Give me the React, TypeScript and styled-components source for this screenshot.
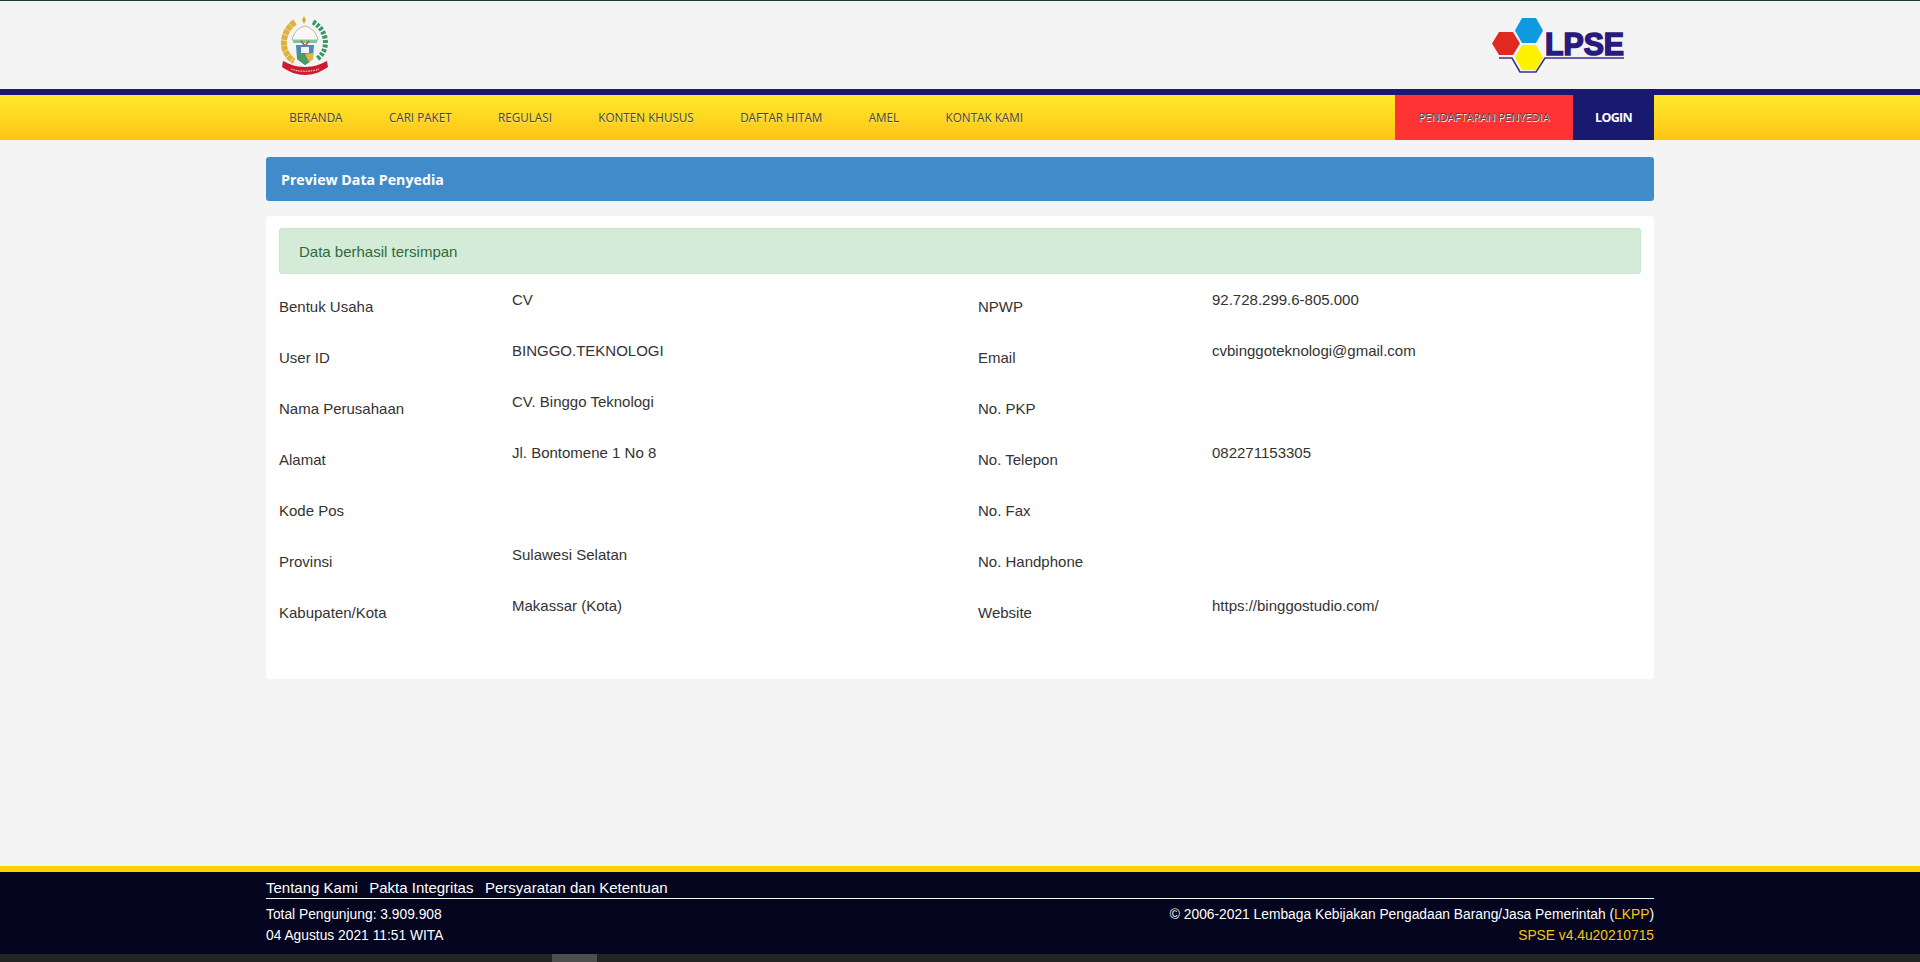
import * as React from 'react';
import styled, { createGlobalStyle } from 'styled-components';

const GlobalStyle = createGlobalStyle`
  html, body {
    margin: 0;
    padding: 0;
    height: 100%;
    overflow: hidden;
    background: #f4f4f4;
  }
  * { box-sizing: border-box; }
`;

const Page = styled.div`
  display: flex;
  flex-direction: column;
  height: 962px;
  font-family: "Liberation Sans", Arial, sans-serif;
  font-size: 14px;
  color: #333;
  background: #f4f4f4;
`;

const Container = styled.div`
  width: 1388px;
  margin-left: 266px;
`;

const Header = styled.header`
  height: 95px;
  border-top: 1px solid #1f3a24;
  border-bottom: 6px solid #191970;
`;

const HeaderInner = styled(Container)`
  display: flex;
  justify-content: space-between;
  padding: 14px 24px 0 14px;
`;

const NavBar = styled.nav`
  height: 45px;
  background: linear-gradient(to bottom, #ffea2c, #fdc416);
`;

const NavInner = styled(Container)`
  display: flex;
  height: 100%;
  font-family: "Open Sans", sans-serif;
  font-size: 11.7px;
`;

const NavItem = styled.a`
  display: flex;
  align-items: center;
  padding: 0 23.2px 2px;
  color: #444;
  text-shadow: 0 1px 0 rgba(255, 255, 255, 0.45);
`;

const NavSpacer = styled.div`
  flex: 1;
`;

const RegisterButton = styled.a`
  display: flex;
  align-items: center;
  justify-content: center;
  width: 178px;
  padding-bottom: 2px;
  background: #ff3333;
  color: #444;
  text-shadow: 0.7px 0.7px 0 #fff;
  font-size: 11px;
`;

const LoginButton = styled.a`
  display: flex;
  align-items: center;
  justify-content: center;
  width: 81px;
  margin-top: -6px;
  padding-top: 6px;
  background: #191970;
  color: #fff;
  font-size: 12.5px;
  font-weight: 700;
  letter-spacing: -0.7px;
`;

const Content = styled(Container)`
  flex: 1;
  padding-top: 17px;
`;

const PanelHeading = styled.div`
  height: 44px;
  padding: 0 15px;
  display: flex;
  align-items: center;
  border-radius: 3px;
  background: #428bca;
  color: #fff;
  font-family: "Open Sans", sans-serif;
  font-size: 14.2px;
  font-weight: 700;
`;

const Card = styled.div`
  height: 463px;
  margin-top: 15px;
  padding: 12px 13px;
  border-radius: 4px;
  background: #fff;
`;

const Alert = styled.div`
  height: 46px;
  padding: 1px 19px 0;
  display: flex;
  align-items: center;
  border: 1px solid #c9e4cf;
  border-radius: 3px;
  background: #d4ebd8;
  color: #2e6b3a;
  font-size: 15px;
`;

const DataGrid = styled.div`
  display: grid;
  grid-template-columns: 699px 1fr;
  margin-top: 8px;
`;

const Row = styled.div<{ $labelWidth: number }>`
  display: grid;
  grid-template-columns: ${p => p.$labelWidth}px 1fr;
  height: 51px;
`;

const Label = styled.div`
  padding-top: 15px;
  font-size: 15px;
  line-height: 20px;
`;

const Value = styled.div`
  padding-top: 8px;
  font-size: 15px;
  line-height: 20px;
`;

const Footer = styled.footer`
  height: 88px;
  border-top: 6px solid #ffd200;
  background: #05051f;
  color: #fff;
`;

const FooterLinks = styled.div`
  display: flex;
  gap: 11.5px;
  height: 27px;
  padding-top: 7px;
  border-bottom: 1px solid #f4f4f4;
  font-size: 15px;
  line-height: 17px;
`;

const FooterRows = styled.div`
  display: flex;
  justify-content: space-between;
  padding-top: 5px;
  font-size: 13.8px;
  line-height: 21px;
`;

const FooterRight = styled.div`
  text-align: right;
`;

const Accent = styled.span`
  color: #f5c518;
`;

const ScrollTrack = styled.div`
  flex: none;
  height: 8px;
  padding-left: 552px;
  background: #242424;
`;

const ScrollThumb = styled.div`
  width: 45px;
  height: 100%;
  background: #4d4d4d;
`;

const CoatOfArms = () => (
  <svg width="50" height="60" viewBox="0 0 50 60">
    <defs>
      <filter id="soft"><feGaussianBlur stdDeviation="0.4" /></filter>
    </defs>
    <g filter="url(#soft)">
      <path d="M15 7 C5 14 2 26 5 35 C7 40 10 44 14 46" fill="none" stroke="#dcb23e" strokeWidth="6" strokeDasharray="5 0.5" />
      <path d="M33 7 C42 12 47 22 45 32 C44 37 41 41 37 44" fill="none" stroke="#3d9563" strokeWidth="5" strokeDasharray="3 1.5" />
      <path d="M24 1 L26 5 L24 9 L22 5 Z" fill="#d8a93c" />
      <path d="M12 25 C14 15 21 12 25 11 C29 12 36 15 38 25 Z" fill="#f8f8f6" stroke="#b9b2a3" strokeWidth="1" />
      <rect x="13" y="25" width="24" height="3" fill="#7fc29b" />
      <path d="M21 26 L25 31 L29 26" fill="none" stroke="#b5533a" strokeWidth="1.5" />
      <path d="M16 30 H34 L33 44 L25 50 L17 44 Z" fill="#4b89bd" />
      <rect x="21" y="32" width="8" height="6" fill="#f2f2f2" />
      <path d="M17 39 H25 L30 47 L25 50 L17 44 Z" fill="#4a9b6b" />
      <path d="M25 39 L33 38 L33 44 L29 47 Z" fill="#e2b93f" />
      <path d="M3 46 C9 49 16 52 25 52 C34 52 41 49 47 46 L48 52 C41 57 33 60 25 60 C17 60 9 57 2 52 Z" fill="#cc1f2f" />
      <path d="M11 54 C18 57 32 57 39 54" fill="none" stroke="#f4d9d9" strokeWidth="1.2" strokeDasharray="1.5 1" />
    </g>
  </svg>
);

const LpseLogo = () => (
  <svg width="140" height="60" viewBox="0 0 140 60">
    <polyline points="9,43 22,43 30,57 46,57 55,43 134,43" fill="none" stroke="#3b3187" strokeWidth="1.6" />
    <polygon points="2,28.5 9,17 23,17 30,28.5 23,40 9,40" fill="#e02a1f" />
    <polygon points="25,15.5 32,3 46,3 53,15.5 46,28 32,28" fill="#0f9ae0" />
    <polygon points="25,42.5 32,30 46,30 53,42.5 46,55 32,55" fill="#fff200" />
    <text x="55" y="40" textLength="79" lengthAdjust="spacingAndGlyphs" fontFamily="Liberation Sans" fontWeight="700" fontSize="31" fill="#2a1a7c" stroke="#2a1a7c" strokeWidth="1.6">LPSE</text>
  </svg>
);

const NAV_ITEMS = ['BERANDA', 'CARI PAKET', 'REGULASI', 'KONTEN KHUSUS', 'DAFTAR HITAM', 'AMEL', 'KONTAK KAMI'];

const LEFT_ROWS = [
  ['Bentuk Usaha', 'CV'],
  ['User ID', 'BINGGO.TEKNOLOGI'],
  ['Nama Perusahaan', 'CV. Binggo Teknologi'],
  ['Alamat', 'Jl. Bontomene 1 No 8'],
  ['Kode Pos', ''],
  ['Provinsi', 'Sulawesi Selatan'],
  ['Kabupaten/Kota', 'Makassar (Kota)'],
];

const RIGHT_ROWS = [
  ['NPWP', '92.728.299.6-805.000'],
  ['Email', 'cvbinggoteknologi@gmail.com'],
  ['No. PKP', ''],
  ['No. Telepon', '082271153305'],
  ['No. Fax', ''],
  ['No. Handphone', ''],
  ['Website', 'https://binggostudio.com/'],
];

const App = (): React.ReactElement => (
  <Page>
    <GlobalStyle />
    <Header>
      <HeaderInner>
        <CoatOfArms />
        <LpseLogo />
      </HeaderInner>
    </Header>
    <NavBar>
      <NavInner>
        {NAV_ITEMS.map(item => <NavItem key={item}>{item}</NavItem>)}
        <NavSpacer />
        <RegisterButton>PENDAFTARAN PENYEDIA</RegisterButton>
        <LoginButton>LOGIN</LoginButton>
      </NavInner>
    </NavBar>
    <Content>
      <PanelHeading>Preview Data Penyedia</PanelHeading>
      <Card>
        <Alert>Data berhasil tersimpan</Alert>
        <DataGrid>
          {LEFT_ROWS.map((left, i) => (
            <React.Fragment key={left[0]}>
              <Row $labelWidth={233}>
                <Label>{left[0]}</Label>
                <Value>{left[1]}</Value>
              </Row>
              <Row $labelWidth={234}>
                <Label>{RIGHT_ROWS[i][0]}</Label>
                <Value>{RIGHT_ROWS[i][1]}</Value>
              </Row>
            </React.Fragment>
          ))}
        </DataGrid>
      </Card>
    </Content>
    <Footer>
      <Container>
        <FooterLinks>
          <span>Tentang Kami</span>
          <span>Pakta Integritas</span>
          <span>Persyaratan dan Ketentuan</span>
        </FooterLinks>
        <FooterRows>
          <div>
            <div>Total Pengunjung: 3.909.908</div>
            <div>04 Agustus 2021 11:51 WITA</div>
          </div>
          <FooterRight>
            <div>© 2006-2021 Lembaga Kebijakan Pengadaan Barang/Jasa Pemerintah (<Accent>LKPP</Accent>)</div>
            <Accent>SPSE v4.4u20210715</Accent>
          </FooterRight>
        </FooterRows>
      </Container>
    </Footer>
    <ScrollTrack>
      <ScrollThumb />
    </ScrollTrack>
  </Page>
);

export default App;
